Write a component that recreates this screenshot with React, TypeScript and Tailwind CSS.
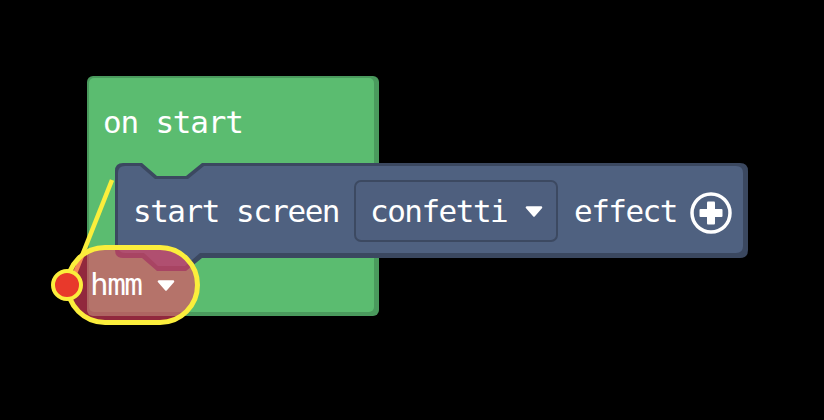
import React from "react";

const mono = { fontFamily: '"DejaVu Sans Mono", "Liberation Mono", monospace' };

function Tri() {
  return (
    <svg width="18" height="11" viewBox="0 0 18 11" className="block">
      <path d="M2 1.5 H16 L9 9.5 Z" fill="#fff" stroke="#fff" strokeWidth="2.5" strokeLinejoin="round" />
    </svg>
  );
}

function PlusCircle() {
  return (
    <svg width="42" height="42" viewBox="0 0 42 42" className="block">
      <circle cx="21" cy="21" r="19" fill="none" stroke="#fff" strokeWidth="3.5" />
      <rect x="17" y="9.5" width="8" height="23" rx="1" fill="#fff" />
      <rect x="9.5" y="17" width="23" height="8" rx="1" fill="#fff" />
    </svg>
  );
}

export default function App() {
  return (
    <div className="relative w-[824px] h-[420px] bg-black overflow-hidden text-white" style={mono}>
      {/* on start block */}
      <div className="absolute left-[87px] top-[76px] w-[292px] h-[240px]">
        <svg className="absolute inset-0" width="292" height="240">
          <rect x="0" y="0" width="292" height="240" rx="6" fill="#4a9a5d" />
          <rect x="2" y="2" width="285" height="234" rx="5" fill="#5bbc70" />
        </svg>
        <div className="relative pl-[16px] pt-[28px] text-[31px] leading-[36px] tracking-[-1.2px]">on start</div>
      </div>

      {/* comment line */}
      <svg className="absolute left-[60px] top-[170px]" width="70" height="120">
        <line x1="14" y1="106" x2="52" y2="10" stroke="#fbee3c" strokeWidth="4.5" />
      </svg>

      {/* start screen block */}
      <div className="absolute left-[115px] top-[163px] w-[633px] h-[95px]">
        <svg className="absolute left-0 top-0 overflow-visible" width="633" height="110">
          <path
            d="M0,8 Q0,0 8,0 H27 L42,13 H71 L87,0 H625 Q633,0 633,8 V87 Q633,95 625,95 H87 L71,108 H42 L27,95 H8 Q0,95 0,87 Z"
            fill="#3b4860"
          />
          <path
            d="M3,10 Q3,3 10,3 H25 L40,16 H73 L89,3 H621 Q628,3 628,10 V83 Q628,90 621,90 H85 L70,103 H43 L29,90 H10 Q3,90 3,83 Z"
            fill="#4f6180"
          />
        </svg>
        <div className="relative flex items-center h-[95px] pt-[1px] pl-[18px] text-[31px] leading-[36px] tracking-[-1.5px]">
          <span>start screen</span>
          <div className="ml-[15px] h-[62px] w-[204px] flex items-center pl-[14px] pr-[13px] justify-between rounded-[7px] border-2 border-[#3c4961] bg-[#4e5f7e]">
            <span>confetti</span>
            <Tri />
          </div>
          <span className="ml-[16px]">effect</span>
          <span className="ml-[13px] mt-[4px]">
            <PlusCircle />
          </span>
        </div>
      </div>

      {/* hmm reporter with error highlight */}
      <div className="absolute left-[65px] top-[245px] w-[135px] h-[80px] rounded-full border-[5px] border-[#fbee3c] bg-[rgba(242,67,101,0.6)] flex items-center pl-[20px] gap-[15px] text-[31px] leading-[36px] tracking-[-1.5px]">
        <span className="-mt-[2px]">hmm</span>
        <Tri />
      </div>

      {/* error dot */}
      <div className="absolute left-[51px] top-[269px] w-[32px] h-[32px] rounded-full bg-[#e8392b] border-4 border-[#fbee3c]" />
    </div>
  );
}
